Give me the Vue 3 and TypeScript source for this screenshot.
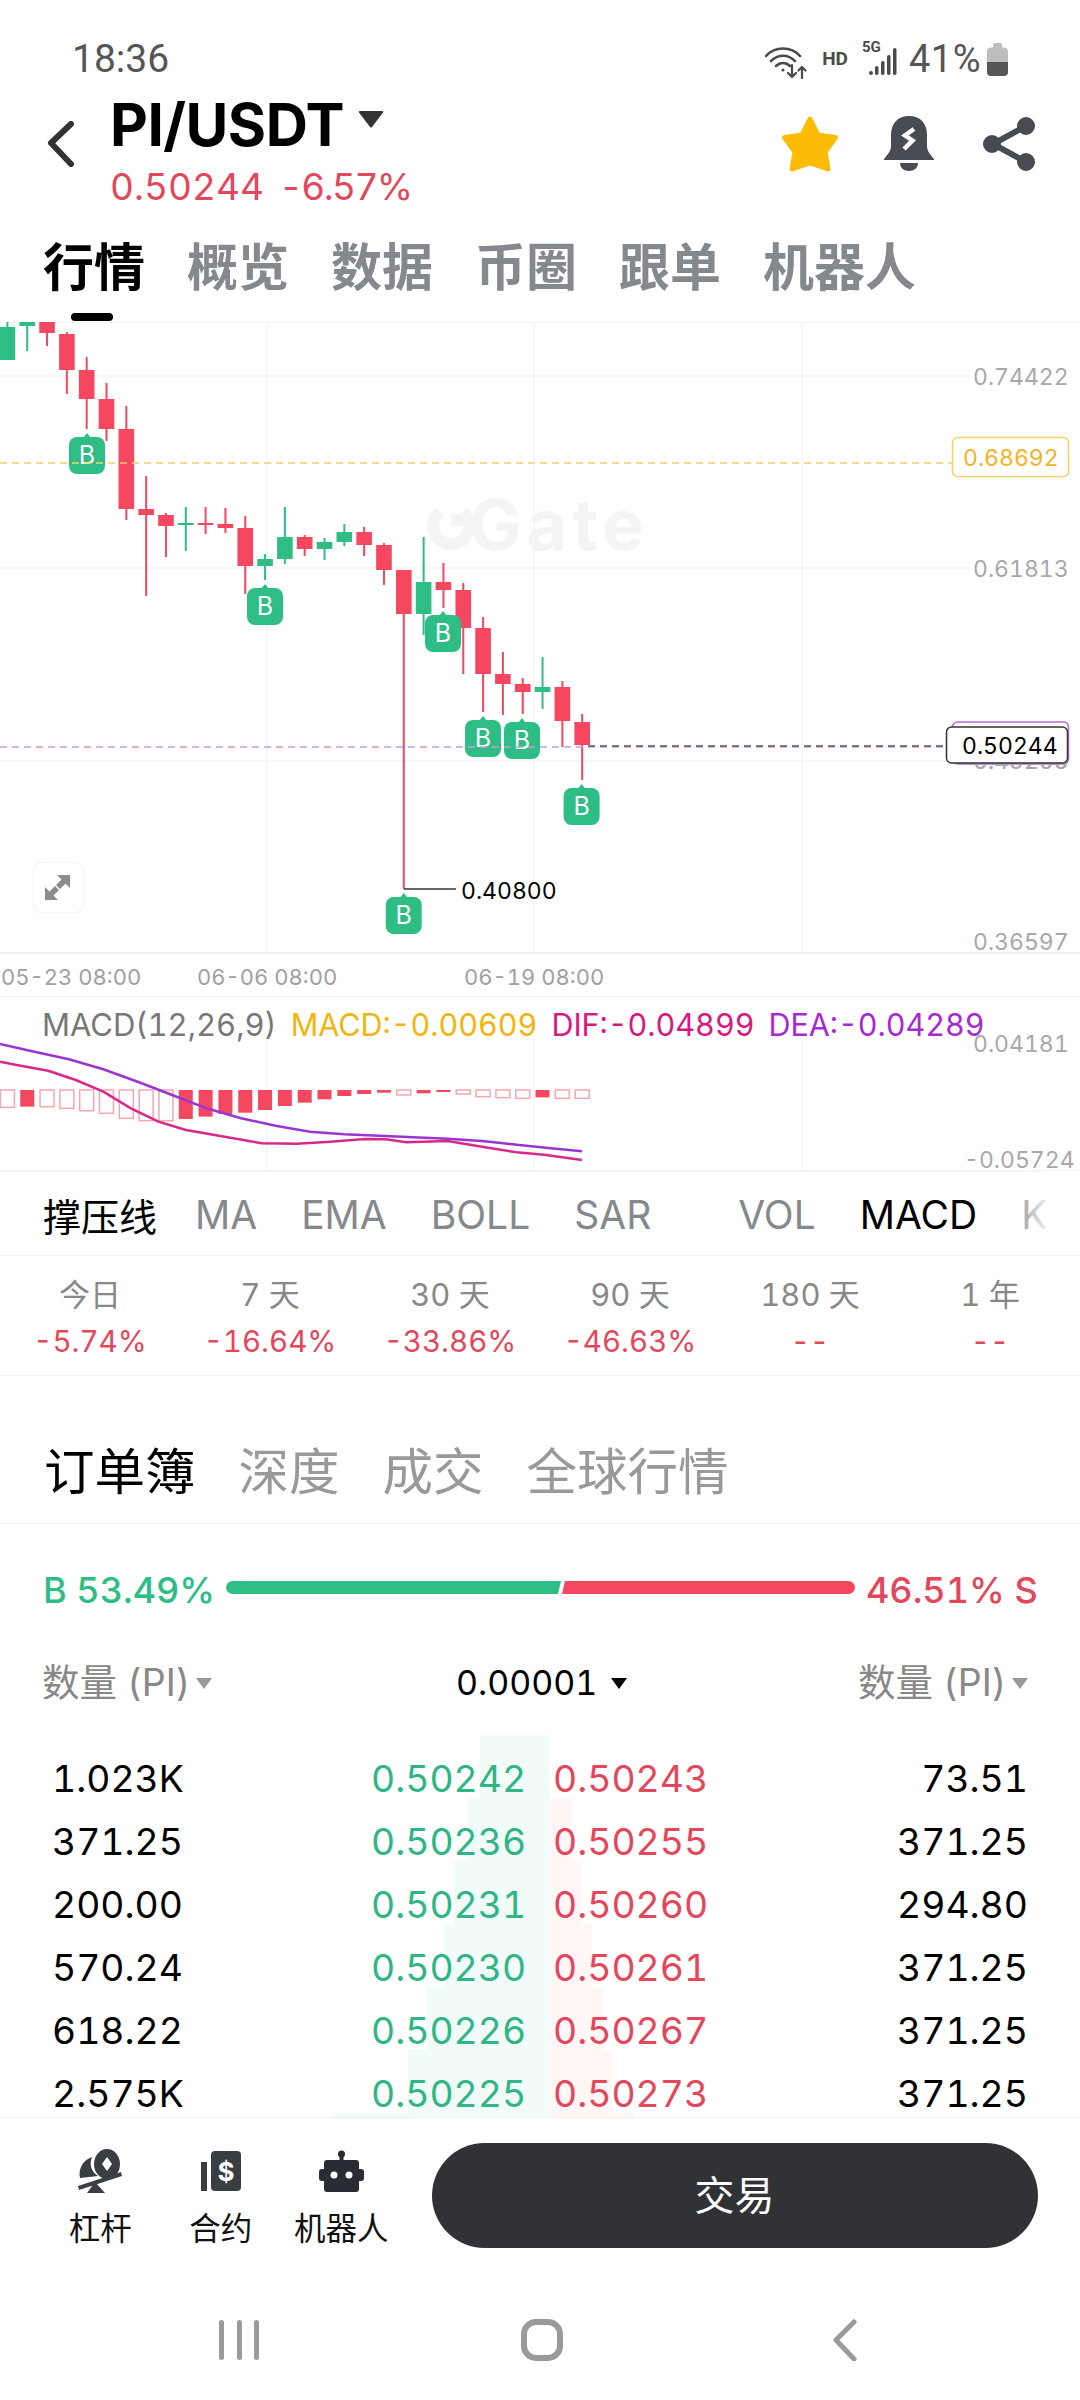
<script setup lang="ts">
const raw: number[][] = [
  [1, 322, 327, 360, 360],
  [1, 322, 322, 326, 351],
  [0, 322, 322, 333, 346],
  [0, 332, 334, 370, 394],
  [0, 357, 370, 399, 429],
  [0, 383, 399, 429, 441],
  [0, 406, 429, 509, 520],
  [0, 476, 509, 515, 596],
  [0, 513, 515, 526, 557],
  [1, 507, 523, 525, 551],
  [0, 507, 523, 525, 534],
  [0, 508, 524, 528, 533],
  [0, 516, 528, 566, 594],
  [1, 554, 559, 566, 580],
  [1, 507, 537, 559, 564],
  [0, 535, 537, 549, 556],
  [1, 538, 542, 549, 560],
  [1, 524, 532, 542, 546],
  [0, 527, 532, 545, 556],
  [0, 543, 545, 570, 585],
  [0, 570, 570, 614, 889],
  [1, 537, 582, 614, 635],
  [0, 563, 582, 590, 608],
  [0, 583, 590, 628, 674],
  [0, 617, 628, 674, 712],
  [0, 652, 674, 684, 715],
  [0, 678, 684, 692, 714],
  [1, 657, 687, 692, 709],
  [0, 681, 687, 721, 747],
  [0, 714, 722, 745, 780],
]
const candleX = (i: number): number => 7.4 + 19.82 * i
const candles = raw.map((c, i) => ({
  x: candleX(i),
  color: c[0] ? '#2ebd85' : '#f5475f',
  top: c[1],
  bodyTop: c[2],
  bodyH: c[3] - c[2],
  bottom: c[4],
}))

const markers = [
  [87, 437],
  [265, 588],
  [443, 615],
  [483, 720],
  [522, 722],
  [581.6, 788],
  [403.7, 897],
].map(([x, y]) => ({ x, y }))

const gridH = [376, 568, 761]
const gridV = [267, 534, 802]
const axis = [
  { t: '0.74422', y: 376 },
  { t: '0.61813', y: 568 },
  { t: '0.49205', y: 760 },
  { t: '0.36597', y: 941 },
]
const times = [
  { t: '05-23 08:00', x: 1 },
  { t: '06-06 08:00', x: 197 },
  { t: '06-19 08:00', x: 464 },
]

const histRaw: [number, number][] = [
  [0, 382], [1, 380], [0, 380], [0, 385], [0, 392], [0, 400], [0, 415], [0, 422], [0, 422], [1, 417],
  [1, 410], [1, 402], [1, 398], [1, 390], [1, 378], [1, 368], [1, 358], [1, 348], [1, 342], [1, 338],
  [0, 345], [1, 340], [1, 336], [0, 342], [0, 350], [0, 353], [0, 355], [1, 352], [0, 355], [0, 355],
]
const hist = histRaw.map(([solid, v], i) => ({
  x: candleX(i) - 7,
  h: (v - 330) / 3,
  solid: solid === 1,
}))
const toLine = (p: [number, number][]): string =>
  p.map(([x, y]) => `${(x / 1.452).toFixed(1)},${(980 + y / 3).toFixed(1)}`).join(' ')
const dea = toLine([
  [0, 192], [50, 215], [100, 238], [150, 268], [200, 305], [250, 345], [300, 385], [350, 415], [400, 437],
  [450, 455], [500, 463], [550, 467], [600, 472], [650, 476], [700, 483], [750, 494], [800, 505], [845, 514],
])
const dif = toLine([
  [0, 245], [30, 257], [70, 272], [110, 300], [150, 335], [190, 385], [230, 425], [270, 450], [320, 468],
  [380, 490], [430, 491], [480, 485], [530, 477], [560, 478], [590, 487], [650, 483], [700, 500], [750, 517],
  [790, 524], [845, 540],
])

const tabs = ['行情', '概览', '数据', '币圈', '跟单', '机器人']
const indicators = ['MA', 'EMA', 'BOLL', 'SAR']
const stats = [
  { l: '今日', v: '-5.74%' },
  { l: '7 天', v: '-16.64%' },
  { l: '30 天', v: '-33.86%' },
  { l: '90 天', v: '-46.63%' },
  { l: '180 天', v: '--' },
  { l: '1 年', v: '--' },
]
const bookTabs = ['深度', '成交', '全球行情']
const rows = [
  ['1.023K', '0.50242', '0.50243', '73.51'],
  ['371.25', '0.50236', '0.50255', '371.25'],
  ['200.00', '0.50231', '0.50260', '294.80'],
  ['570.24', '0.50230', '0.50261', '371.25'],
  ['618.22', '0.50226', '0.50267', '371.25'],
  ['2.575K', '0.50225', '0.50273', '371.25'],
]
const depth = [
  [69, 0],
  [81, 23],
  [95, 33],
  [105, 43],
  [122, 54],
  [141, 63],
  [214, 85],
]
</script>

<template>
  <div class="page">
    <div class="status">
      <span class="time">18:36</span>
      <div class="status-right">
        <svg class="wifi" width="42" height="32" viewBox="0 0 42 32" fill="none" stroke="#4a4a4a" stroke-width="2.6" stroke-linecap="round">
          <path d="M1 9C10 -1 26 -1 35 9" />
          <path d="M6 14C13 7 23 7 30 14" />
          <path d="M11 19C15 15 21 15 25 19" />
          <circle cx="18" cy="23" r="1.6" fill="#4a4a4a" stroke="none" />
          <path d="M27 18V30M23 26L27 30L31 26" stroke-width="2.2" />
          <path d="M37 31V20M33.500 23.500L37 20L40.500 23.500" stroke-width="2.2" />
        </svg>
        <span class="hd">HD</span>
        <div class="net">
          <span class="fiveg">5G</span>
          <svg width="28" height="28" viewBox="0 0 28 28" fill="#4a4a4a">
            <rect x="0" y="23" width="4" height="4" rx="2" />
            <rect x="6" y="18" width="3.500" height="9" rx="1.700" />
            <rect x="12" y="13" width="3.500" height="14" rx="1.700" />
            <rect x="18" y="7" width="3.500" height="20" rx="1.700" />
            <rect x="24" y="0" width="3.500" height="27" rx="1.700" />
          </svg>
        </div>
        <span class="pct">41%</span>
        <svg width="21" height="33" viewBox="0 0 21 33">
          <path d="M6 4.500V2a2 2 0 0 1 2-2h5a2 2 0 0 1 2 2v2.500h2a4 4 0 0 1 4 4V19H0V8.500a4 4 0 0 1 4-4z" fill="#bdbdbd" />
          <path d="M0 19h21v10a4 4 0 0 1-4 4H4a4 4 0 0 1-4-4z" fill="#555" />
        </svg>
      </div>
    </div>

    <div class="header">
      <svg class="back" width="28" height="46" viewBox="0 0 28 46" fill="none" stroke="#333" stroke-width="6" stroke-linecap="round" stroke-linejoin="round">
        <path d="M24 3L4 22L24 43" />
      </svg>
      <div class="title">
        <div class="pair-row">
          <span class="pair">PI/USDT</span>
          <svg class="pair-caret" width="26" height="17" viewBox="0 0 26 17"><path d="M1 1.500Q0 0 2 0H24Q26 0 25 1.500L14 16Q13 17 12 16Z" fill="#333" /></svg>
        </div>
        <div class="price-row"><span>0.50244</span><span class="chg">-6.57%</span></div>
      </div>
      <div class="actions">
        <svg class="act-star" width="58" height="56" viewBox="0 0 58 56"><polygon points="29,3 37,19 54.500,21.500 44,36 47,53 29,47 11,53 14,36 3.500,21.500 21,19" fill="#fcbc05" stroke="#fcbc05" stroke-width="5" stroke-linejoin="round" /></svg>
        <svg class="act-bell" width="50" height="56" viewBox="0 0 50 56">
          <path d="M25 0C13 0 7 8 7 19V30C7 35 4 38 0 43Q-0.500 44 1 44H49Q50.500 44 50 43C46 38 43 35 43 30V19C43 8 37 0 25 0Z" fill="#484b51" />
          <path d="M16 47H34C34 52 30 55 25 55C20 55 16 52 16 47Z" fill="#484b51" />
          <path d="M30 13L21 19.500L28.500 24.500L20 33" fill="none" stroke="#fff" stroke-width="4.500" stroke-linejoin="miter" />
        </svg>
        <svg width="54" height="56" viewBox="0 0 54 56" fill="#484b51" stroke="#484b51" stroke-width="6">
          <path d="M43 10L10 28L43 46" fill="none" />
          <circle cx="43" cy="10" r="6" />
          <circle cx="9" cy="28" r="6" />
          <circle cx="43" cy="46" r="6" />
        </svg>
      </div>
    </div>

    <div class="tabs">
      <span v-for="(t, i) in tabs" :key="t" class="tab" :class="{ on: i === 0 }">{{ t }}</span>
    </div>

    <svg class="chart" width="1080" height="675" viewBox="0 322 1080 675">
      <line x1="0" x2="1080" y1="322" y2="322" stroke="#eeeeee" stroke-width="1.500" />
      <line v-for="y in gridH" :key="y" x1="0" :x2="y === 761 ? 950 : 970" :y1="y" :y2="y" stroke="#f4f4f4" stroke-width="1.500" />
      <line x1="0" x2="1080" y1="953" y2="953" stroke="#eeeeee" stroke-width="1.500" />
      <line x1="0" x2="1080" y1="997" y2="997" stroke="#eeeeee" stroke-width="1.500" />
      <line v-for="x in gridV" :key="x" :x1="x" :x2="x" y1="324" y2="952" stroke="#f4f4f4" stroke-width="1.500" />

      <circle cx="451" cy="526" r="18" fill="none" stroke="#f3f5f5" stroke-width="12" stroke-dasharray="88 25" transform="rotate(-50 451 526)" />
      <rect x="451" y="514" width="12" height="12" fill="#f3f5f5" />
      <text class="mark" x="469" y="550">Gate</text>

      <g v-for="c in candles" :key="c.x">
        <line :x1="c.x" :x2="c.x" :y1="c.top" :y2="c.bottom" :stroke="c.color" stroke-width="2" />
        <rect :x="c.x - 7.800" :y="c.bodyTop" width="15.600" :height="c.bodyH" :fill="c.color" />
      </g>

      <g v-for="m in markers" :key="m.x">
        <path :d="`M${m.x - 4} ${m.y + 1}L${m.x} ${m.y - 4}L${m.x + 4} ${m.y + 1}Z`" fill="#2ebd85" />
        <rect :x="m.x - 18" :y="m.y" width="36" height="37" rx="8" fill="#2ebd85" />
        <text class="b" :x="m.x" :y="m.y + 27">B</text>
      </g>

      <line x1="0" x2="952" y1="463" y2="463" stroke="#f0d469" stroke-width="1.500" stroke-dasharray="7 5" />
      <line x1="0" x2="946" y1="747" y2="747" stroke="#c89be2" stroke-width="1.500" stroke-dasharray="7 5" />
      <line x1="588" x2="946" y1="746" y2="746" stroke="#555566" stroke-width="1.500" stroke-dasharray="7 5" />

      <line x1="404" x2="456" y1="889" y2="889" stroke="#333" stroke-width="1.500" />
      <text class="lbl black" x="461" y="899">0.40800</text>

      <text v-for="a in axis" :key="a.t" class="lbl grey" x="973" :y="a.y + 8.500">{{ a.t }}</text>
      <rect x="952.500" y="437.500" width="116" height="39" rx="5" fill="#fff" stroke="#f0d469" stroke-width="1.500" />
      <text class="lbl gold" x="963" y="465.500">0.68692</text>

      <rect x="952.500" y="722" width="116" height="42" rx="5" fill="#fff" stroke="#b56fd0" stroke-width="1.500" />
      <text class="lbl grey" x="973" y="768.500">0.49205</text>
      <rect x="946.500" y="727" width="121" height="36" rx="5" fill="#fff" stroke="#333" stroke-width="1.500" />
      <text class="lbl black" x="962" y="754">0.50244</text>

      <text v-for="t in times" :key="t.t" class="lbl time-lbl" :x="t.x" y="985">{{ t.t }}</text>

      <rect x="33.500" y="862.500" width="50" height="50" rx="8" fill="#fff" stroke="#f5f5f5" stroke-width="1.500" />
      <path d="M70 875V888L65.500 883.500L60 889L56 885L61.500 879.500L57 875ZM45 900V887L49.500 891.500L55 886L59 890L53.500 895.500L58 900Z" fill="#8c8c8c" />
    </svg>

    <div class="macd">
      <div class="legend">
        <span class="l0">MACD(12,26,9)</span>
        <span class="l1">MACD:-0.00609</span>
        <span class="l2">DIF:-0.04899</span>
        <span class="l3">DEA:-0.04289</span>
      </div>
      <svg width="1080" height="174" viewBox="0 997 1080 174">
        <line v-for="x in gridV" :key="x" :x1="x" :x2="x" y1="1040" y2="1170" stroke="#f4f4f4" stroke-width="1.500" />
        <line x1="0" x2="1080" y1="1171" y2="1171" stroke="#eeeeee" stroke-width="1.500" />
        <rect
          v-for="b in hist"
          :key="b.x"
          :x="b.x"
          y="1090"
          width="14"
          :height="b.h"
          :fill="b.solid ? '#f5475f' : 'none'"
          :stroke="b.solid ? 'none' : '#f3a7b0'"
          stroke-width="1.500"
        />
        <polyline :points="dif" fill="none" stroke="#d8288a" stroke-width="2.500" />
        <polyline :points="dea" fill="none" stroke="#9b35cf" stroke-width="2.500" />
        <text class="lbl grey" x="973" y="1052">0.04181</text>
        <text class="lbl grey" x="964" y="1168">-0.05724</text>
      </svg>
    </div>

    <div class="inds">
      <span class="ind-cn">撑压线</span>
      <span v-for="n in indicators" :key="n" class="ind">{{ n }}</span>
      <i class="ind-div"></i>
      <span class="ind">VOL</span>
      <span class="ind on">MACD</span>
      <span class="ind">KDJ</span>
      <i class="ind-fade"></i>
    </div>

    <div class="stats">
      <div v-for="s in stats" :key="s.l" class="stat">
        <span class="stat-l">{{ s.l }}</span>
        <span class="stat-v">{{ s.v }}</span>
      </div>
    </div>

    <div class="book-tabs">
      <span class="bt on">订单簿</span>
      <span v-for="t in bookTabs" :key="t" class="bt">{{ t }}</span>
    </div>

    <div class="ratio">
      <span class="buy">B 53.49%</span>
      <div class="bar"><i class="bar-g"></i><i class="bar-r"></i></div>
      <span class="sell">46.51% S</span>
    </div>

    <div class="book-head">
      <div class="bh"><span>数量 (PI)</span><i class="caret"></i></div>
      <div class="bh dark"><span>0.00001</span><i class="caret"></i></div>
      <div class="bh"><span>数量 (PI)</span><i class="caret"></i></div>
    </div>

    <div class="book">
      <div class="depth">
        <div v-for="(d, i) in depth" :key="i" class="depth-row">
          <i class="dg" :style="{ width: d[0] + 'px' }"></i>
          <i class="dr" :style="{ width: d[1] + 'px' }"></i>
        </div>
      </div>
      <div v-for="r in rows" :key="r[1]" class="row">
        <span>{{ r[0] }}</span>
        <span class="g">{{ r[1] }}</span>
        <span class="r">{{ r[2] }}</span>
        <span class="end">{{ r[3] }}</span>
      </div>
    </div>

    <div class="footer">
      <div class="tool">
        <svg width="46" height="44" viewBox="0 0 46 44">
          <g fill="#3a3d42">
            <ellipse cx="30" cy="15" rx="13" ry="15" />
            <path d="M15 8C6 11 1 20 3 29L21 27C14 23 12 15 15 8Z" />
            <path d="M1 37L44 23L45 27L2 41Z" />
            <path d="M18 33L28 44H10Z" />
          </g>
          <path d="M30 8L35 15L30 22L25 15Z" fill="#fff" />
        </svg>
        <span>杠杆</span>
      </div>
      <div class="tool">
        <svg width="40" height="40" viewBox="0 0 40 40">
          <rect x="0" y="11" width="6" height="29" fill="#3a3d42" />
          <rect x="10" y="0" width="30" height="40" rx="4" fill="#3a3d42" />
          <text class="dollar" x="25" y="30">$</text>
        </svg>
        <span>合约</span>
      </div>
      <div class="tool">
        <svg width="45" height="42" viewBox="0 0 45 42">
          <circle cx="22.500" cy="4" r="3.500" fill="#2a2c33" />
          <rect x="20.500" y="5" width="4" height="6" fill="#2a2c33" />
          <rect x="0" y="19" width="45" height="12" rx="3" fill="#2a2c33" />
          <rect x="5" y="10" width="35" height="32" rx="3" fill="#2a2c33" />
          <circle cx="15" cy="25" r="3.500" fill="#fff" />
          <circle cx="30" cy="25" r="3.500" fill="#fff" />
        </svg>
        <span>机器人</span>
      </div>
      <div class="trade">交易</div>
    </div>

    <div class="nav">
      <svg width="60" height="42" viewBox="0 0 60 42" fill="#9a9a9a">
        <rect x="9" y="1" width="5" height="40" rx="2.500" />
        <rect x="27" y="1" width="5" height="40" rx="2.500" />
        <rect x="44" y="1" width="5" height="40" rx="2.500" />
      </svg>
      <svg width="60" height="42" viewBox="0 0 60 42" fill="none" stroke="#9a9a9a" stroke-width="6">
        <rect x="12" y="3" width="36" height="36" rx="12" />
      </svg>
      <svg width="60" height="42" viewBox="0 0 60 42" fill="none" stroke="#9a9a9a" stroke-width="5" stroke-linecap="round" stroke-linejoin="round">
        <path d="M40 3L22 21L40 40" />
      </svg>
    </div>
  </div>
</template>

<style>
html, body { margin: 0; background: #fff; }
</style>

<style scoped>
.page {
  width: 1080px;
  height: 2400px;
  overflow: hidden;
  background: #fff;
  display: flex;
  flex-direction: column;
  font-family: Inter, "Noto Sans CJK SC", sans-serif;
  font-variant-numeric: tabular-nums;
  color: #000;
}
.status {
  height: 95px;
  box-sizing: border-box;
  padding: 36px 72px 0 72px;
  display: flex;
  justify-content: space-between;
  flex-shrink: 0;
}
.time { font: 400 39px/46px Roboto, sans-serif; color: #555; }
.status-right { display: flex; align-items: center; height: 46px; }
.wifi { margin-top: 8px; margin-right: -3px; }
.hd { font: 700 19px/46px Roboto, sans-serif; color: #4a4a4a; margin-left: 18px; }
.net { position: relative; width: 36px; height: 46px; margin-left: 13px; display: flex; align-items: flex-end; justify-content: flex-end; }
.net svg { margin-bottom: 6px; }
.fiveg { position: absolute; left: 1px; top: 2px; font: 700 15px/18px Roboto, sans-serif; color: #4a4a4a; }
.pct { font: 400 38px/46px Roboto, sans-serif; color: #555; margin-left: 12px; letter-spacing: 0.5px; }
.pct + svg { margin-left: 6px; }
.header { height: 113px; flex-shrink: 0; display: flex; align-items: flex-start; padding-left: 47px; padding-right: 43px; }
.back { margin-top: 26px; }
.title { margin-left: 35px; flex: 1; }
.pair-row { display: flex; height: 60px; align-items: center; }
.pair { font-size: 58.500px; font-weight: 700; line-height: 62px; letter-spacing: -0.5px; }
.pair-caret { margin: -12px 0 0 14px; }
.price-row { margin-top: 10px; display: flex; gap: 15px; font-size: 37px; line-height: 44px; color: #e2475b; }
.chg { letter-spacing: -1.6px; }
.actions { display: flex; gap: 49px; align-items: center; margin-top: 21px; }
.act-bell { margin-left: -4px; }
.tabs { height: 114px; flex-shrink: 0; box-sizing: border-box; padding: 35px 0 0 43px; display: flex; gap: 42px; position: relative; }
.tab { font-size: 51px; line-height: 50px; font-weight: 700; color: #85888c; }
.tab.on { color: #000; position: relative; }
.tab.on::after {
  content: "";
  position: absolute;
  left: 28px;
  top: 70px;
  width: 42px;
  height: 8px;
  border-radius: 4px;
  background: #000;
}
.chart { display: block; flex-shrink: 0; }
.mark { font: 700 70px Inter, sans-serif; fill: #f3f5f5; letter-spacing: 5px; }
.b { font: 400 25px Inter, sans-serif; fill: #fff; text-anchor: middle; }
.lbl { font: 400 23px Inter, sans-serif; font-variant-numeric: tabular-nums; }
.grey { fill: #a8a8a8; }
.black { fill: #000; }
.gold { fill: #f0b429; }
.time-lbl { fill: #a0a0a0; font-size: 22px; }
.macd { position: relative; height: 174px; flex-shrink: 0; }
.macd svg { display: block; overflow: visible; }
.legend {
  position: absolute;
  left: 42px;
  top: 10px;
  display: flex;
  gap: 14px;
  font-size: 30.500px;
  line-height: 36px;
  white-space: nowrap;
}
.l0 { color: #777; font-size: 31px; }
.l1 { color: #f2b40f; }
.l2 { color: #d8187f; }
.l3 { color: #a62ad4; }
.inds {
  height: 85px;
  flex-shrink: 0;
  box-sizing: border-box;
  border-bottom: 1.5px solid #f0f0f0;
  padding: 2px 0 0 43px;
  display: flex;
  align-items: center;
  gap: 44px;
  position: relative;
  overflow: hidden;
  white-space: nowrap;
}
.ind-cn { font-size: 38px; color: #000; margin-right: -6px; }
.ind { font-size: 39px; color: #85888c; }
.ind.on { color: #000; }
.ind-div { width: 1.5px; height: 30px; background: #e9e9e9; margin-right: -1px; }
.ind-fade {
  position: absolute;
  right: 0;
  top: 0;
  width: 56px;
  height: 100%;
  background: linear-gradient(to right, rgba(255, 255, 255, 0.3), #fff 50%);
}
.stats {
  height: 120px;
  flex-shrink: 0;
  box-sizing: border-box;
  border-bottom: 1.5px solid #f0f0f0;
  display: grid;
  grid-template-columns: repeat(6, 180px);
  padding-top: 20px;
}
.stat { display: flex; flex-direction: column; align-items: center; }
.stat-l { font-size: 31px; line-height: 38px; color: #888; }
.stat-v { font-size: 29.500px; line-height: 38px; margin-top: 8px; color: #e2475b; }
.book-tabs {
  height: 148px;
  flex-shrink: 0;
  box-sizing: border-box;
  border-bottom: 1.5px solid #f0f0f0;
  padding: 70px 0 0 44px;
  display: flex;
  gap: 43px;
}
.bt { font-size: 50.500px; line-height: 52px; color: #999; }
.bt.on { color: #000; }
.ratio {
  height: 116px;
  flex-shrink: 0;
  box-sizing: border-box;
  padding: 44px 43px 0 43px;
  display: flex;
  align-items: flex-start;
  gap: 11px;
  font-size: 36px;
  line-height: 44px;
  font-weight: 500;
}
.buy { color: #2ebd85; width: 172px; flex-shrink: 0; white-space: nowrap; }
.sell { color: #e2475b; width: 171px; flex-shrink: 0; white-space: nowrap; text-align: right; }
.bar { flex: 1; display: flex; height: 13px; margin-top: 13px; }
.bar-g {
  flex: 335;
  background: #2ebd85;
  border-radius: 7px 0 0 7px;
  clip-path: polygon(0 0, 100% 0, calc(100% - 3px) 100%, 0 100%);
}
.bar-r {
  flex: 293;
  background: #f5475f;
  border-radius: 0 7px 7px 0;
  clip-path: polygon(3px 0, 100% 0, 100% 100%, 0 100%);
  margin-left: 1px;
}
.book-head {
  height: 85px;
  flex-shrink: 0;
  box-sizing: border-box;
  padding: 20px 0 0 42px;
  display: grid;
  grid-template-columns: 414px 402px auto;
  font-size: 37.500px;
  line-height: 46px;
  color: #888;
  align-content: start;
}
.bh { display: flex; align-items: center; gap: 6px; }
.bh.dark { color: #000; font-size: 34px; gap: 14px; }
.caret {
  width: 0;
  height: 0;
  border-left: 8px solid transparent;
  border-right: 8px solid transparent;
  border-top: 11px solid #999;
}
.bh.dark .caret { border-top-color: #000; }
.book { position: relative; height: 392px; flex-shrink: 0; box-sizing: border-box; padding-top: 22px; overflow: hidden; }
.depth { position: absolute; top: 10px; left: 0; width: 100%; }
.depth-row { height: 63px; position: relative; }
.dg { position: absolute; right: 531px; top: 0; height: 100%; background: #f1fbf8; }
.dr { position: absolute; left: 549px; top: 0; height: 100%; background: #fff6f6; }
.row {
  position: relative;
  height: 63px;
  display: grid;
  grid-template-columns: 319px 182px 1fr auto;
  padding: 0 52px 0 52px;
  font-size: 37.300px;
  line-height: 63px;
}
.g { color: #2fb586; }
.r { color: #e2475b; }
.end { text-align: right; }
.footer {
  height: 154px;
  flex-shrink: 0;
  box-sizing: border-box;
  border-top: 1.5px solid #f0f0f0;
  padding: 31px 0 0 40px;
  display: flex;
  align-items: flex-start;
}
.tool { width: 120.500px; display: flex; flex-direction: column; align-items: center; font-size: 31.500px; line-height: 40px; color: #111; }
.tool svg { height: 44px; }
.tool span { margin-top: 16px; }
.dollar { font: 700 26px Inter, sans-serif; fill: #fff; text-anchor: middle; }
.trade {
  margin: -6px 0 0 30px;
  width: 606px;
  height: 105px;
  border-radius: 53px;
  background: #303236;
  color: #fff;
  font-size: 40px;
  line-height: 105px;
  text-align: center;
}
.nav { padding: 48px 0 0 4px; display: flex; justify-content: center; gap: 242px; }
</style>
